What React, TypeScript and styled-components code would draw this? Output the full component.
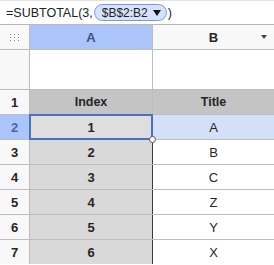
import React from "react";
import styled, { createGlobalStyle } from "styled-components";

const Global = createGlobalStyle`
  html, body { margin: 0; padding: 0; background: #ffffff; }
  body { font-family: "Liberation Sans", Arial, sans-serif; }
`;

const Page = styled.div`
  width: 274px;
  height: 265px;
  overflow: hidden;
  background: #ffffff;
`;

const FormulaBar = styled.div`
  height: 25px;
  box-sizing: border-box;
  border-top: 1px solid #e2e2e2;
  border-bottom: 1px solid #b8b8b8;
  display: flex;
  align-items: center;
  padding-left: 6px;
  font-size: 12.5px;
  color: #222;
  white-space: nowrap;
`;

const RangePill = styled.span`
  display: inline-flex;
  align-items: center;
  gap: 5px;
  height: 15px;
  margin: 0 1px 0 1px;
  padding: 0 5px 0 7px;
  border: 1px solid #7a98da;
  border-radius: 9px;
  background: #d6e2fb;
  color: #222;
  font-size: 12px;
`;

const Triangle = styled.span<{ $w: number; $h: number; $c: string }>`
  display: inline-block;
  width: 0;
  height: 0;
  border-left: ${(p) => p.$w / 2}px solid transparent;
  border-right: ${(p) => p.$w / 2}px solid transparent;
  border-top: ${(p) => p.$h}px solid ${(p) => p.$c};
`;

const Grid = styled.div`
  display: grid;
  grid-template-columns: 29px 122px 121px;
  grid-template-rows: 24px 39px repeat(7, 24px);
  gap: 1px;
  background: #bdbdbd;
  border-right: 1px solid #bdbdbd;
`;

type Tone = "corner" | "colSel" | "col" | "row" | "rowSel" | "empty" | "head" | "idx" | "idxSel" | "title" | "titleSel";

const bg: Record<Tone, string> = {
  corner: "#f8f8f8",
  colSel: "#abc5fb",
  col: "#f8f8f8",
  row: "#f8f8f8",
  rowSel: "#abc5fb",
  empty: "#ffffff",
  head: "#c4c4c4",
  idx: "#d9d9d9",
  idxSel: "#dedede",
  title: "#ffffff",
  titleSel: "#d4dffa",
};

const Cell = styled.div<{ $tone: Tone; $bold?: boolean; $dark?: boolean }>`
  position: relative;
  display: flex;
  align-items: center;
  justify-content: center;
  background: ${(p) => bg[p.$tone]};
  font-size: ${(p) => (p.$tone === "head" ? "12.5px" : "13px")};
  font-weight: ${(p) => (p.$bold ? 700 : 400)};
  color: ${(p) => (p.$tone === "rowSel" ? "#4865a8" : p.$tone === "colSel" ? "#3a5488" : "#262626")};
  ${(p) => (p.$dark ? "box-shadow: 1px 0 0 #3a3a3a;" : "")}
`;

const Dots = styled.span`
  display: grid;
  grid-template-columns: repeat(3, 2px);
  gap: 2px;
  & > i {
    width: 1px;
    height: 1px;
    background: #888;
  }
`;

const HeadDrop = styled.span`
  position: absolute;
  right: 7px;
  top: 10px;
  display: flex;
`;

const Selection = styled.div`
  position: absolute;
  left: -1px;
  top: -1px;
  right: -1px;
  bottom: -1px;
  border: 2px solid #4a70c2;
  pointer-events: none;
  z-index: 2;
`;

const Handle = styled.div`
  position: absolute;
  right: -4px;
  bottom: -4px;
  width: 5px;
  height: 5px;
  border: 1px solid #555;
  border-radius: 50%;
  background: #fff;
  z-index: 3;
`;

const data = [
  ["1", "A"],
  ["2", "B"],
  ["3", "C"],
  ["4", "Z"],
  ["5", "Y"],
  ["6", "X"],
];

export default function App() {
  return (
    <Page>
      <Global />
      <FormulaBar>
        =SUBTOTAL(3,
        <RangePill>
          $B$2:B2 <Triangle $w={8} $h={6} $c="#111" />
        </RangePill>
        )
      </FormulaBar>
      <Grid>
        <Cell $tone="corner">
          <Dots>
            {Array.from({ length: 9 }).map((_, i) => (
              <i key={i} />
            ))}
          </Dots>
        </Cell>
        <Cell $tone="colSel" $bold>A</Cell>
        <Cell $tone="col" $bold>
          B
          <HeadDrop>
            <Triangle $w={6} $h={4} $c="#444" />
          </HeadDrop>
        </Cell>

        <Cell $tone="row" />
        <Cell $tone="empty" />
        <Cell $tone="empty" />

        <Cell $tone="row" $bold>1</Cell>
        <Cell $tone="head" $bold>Index</Cell>
        <Cell $tone="head" $bold>Title</Cell>

        {data.map(([n, t], i) => {
          const sel = i === 0;
          return (
            <React.Fragment key={n}>
              <Cell $tone={sel ? "rowSel" : "row"} $bold>{i + 2}</Cell>
              <Cell $tone={sel ? "idxSel" : "idx"} $bold $dark={!sel}>
                {n}
                {sel && (
                  <>
                    <Selection />
                    <Handle />
                  </>
                )}
              </Cell>
              <Cell $tone={sel ? "titleSel" : "title"}>{t}</Cell>
            </React.Fragment>
          );
        })}
      </Grid>
    </Page>
  );
}
